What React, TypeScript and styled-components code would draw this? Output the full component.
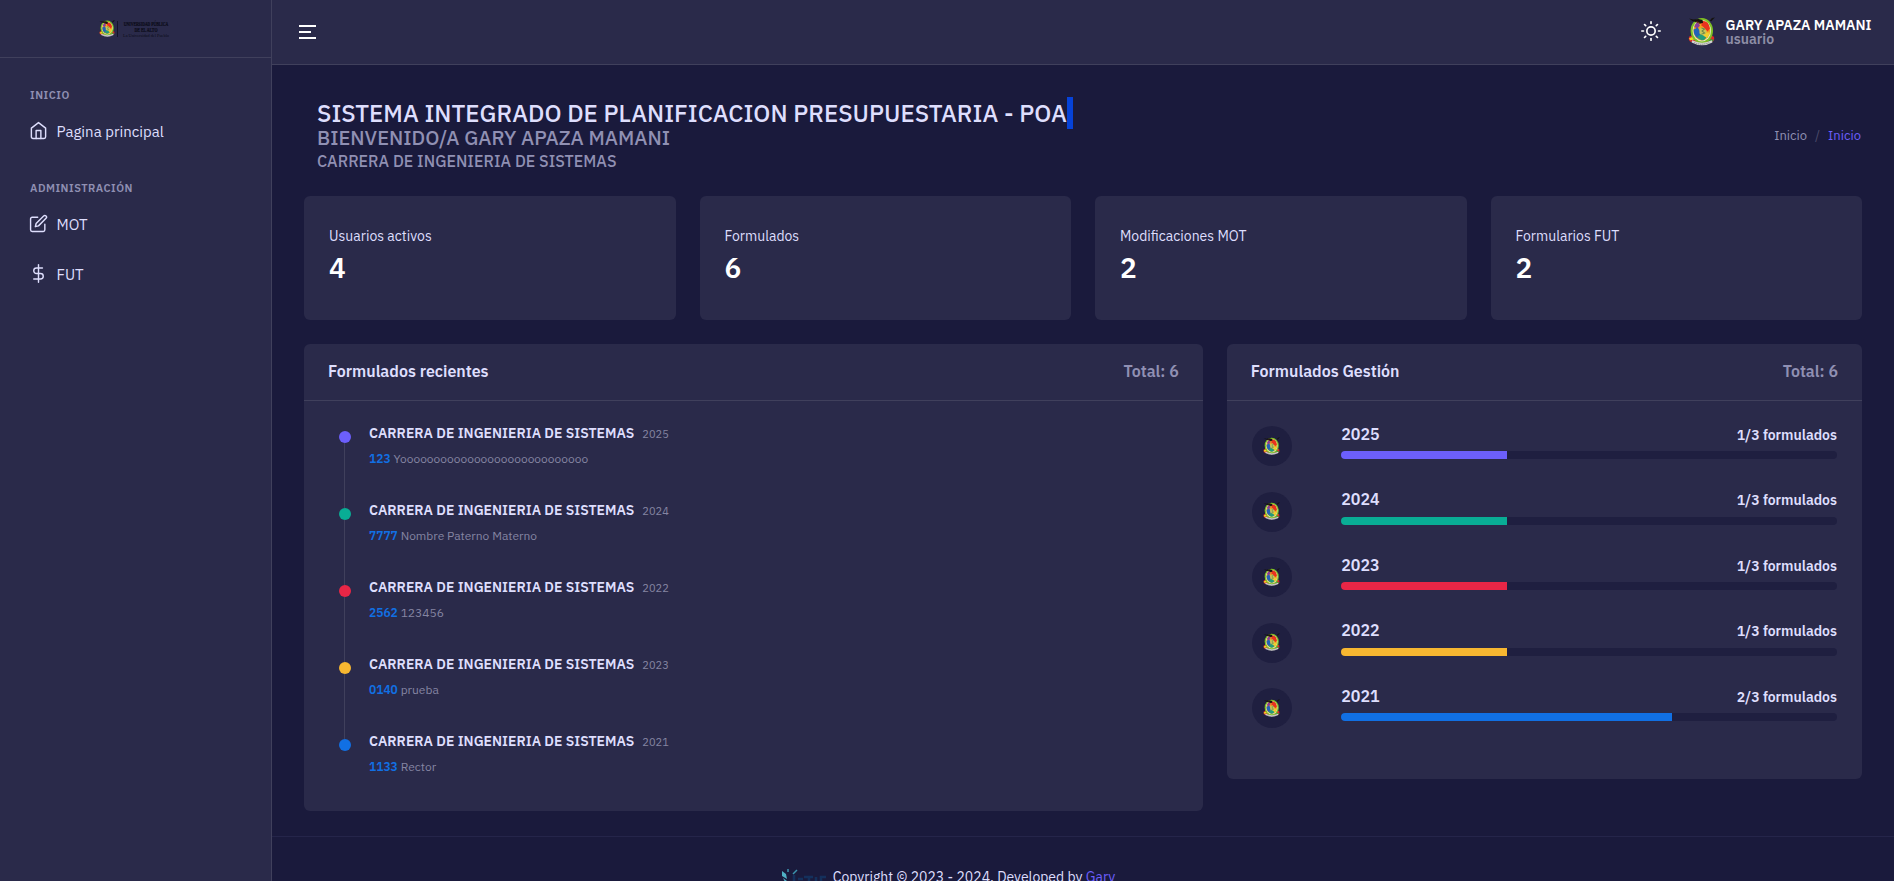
import React from 'react';
import styled, { createGlobalStyle } from 'styled-components';
import { FiHome, FiEdit, FiDollarSign, FiSun } from 'react-icons/fi';

const color = {
  page: '#1a1a3c',
  panel: '#2a2a4a',
  line: '#40405c',
  text: '#dedefd',
  muted: '#9090b3',
  faint: '#8585a2',
  primary: '#6c5ffc',
  green: '#09ad95',
  red: '#e82646',
  yellow: '#f7b731',
  blue: '#1170e4',
};

const Global = createGlobalStyle`
  *, *::before, *::after { box-sizing: border-box; }
  body {
    margin: 0;
    overflow: hidden;
    background: ${color.page};
    color: ${color.text};
    font-family: 'IBM Plex Sans', Roboto, 'Noto Sans', sans-serif;
    font-size: 14px;
  }
  h1, h2, h3, p, ul { margin: 0; padding: 0; }
  ul { list-style: none; }
`;

const Shell = styled.div`
  display: grid;
  grid-template-columns: 272px 1fr;
  height: 881px;
  overflow: hidden;
`;

const Sidebar = styled.aside`
  background: ${color.panel};
  border-right: 1px solid ${color.line};
`;

const Brand = styled.div`
  height: 58px;
  padding: 1px 0 0 99px;
  display: flex;
  align-items: center;
  border-bottom: 1px solid ${color.line};
`;

const BrandText = styled.svg`
  width: 54px;
  height: 18px;
  margin-left: 2px;
  overflow: visible;
  font-family: 'Liberation Serif', serif;
  text-anchor: middle;
  fill: #0b0b18;
`;

const NavTitle = styled.h3<{ $top: number }>`
  margin: ${(p) => p.$top}px 0 4.5px;
  padding-left: 30px;
  font-size: 11px;
  line-height: 14px;
  font-weight: 600;
  letter-spacing: 0.5px;
  color: ${color.muted};
`;

const NavLink = styled.a`
  display: flex;
  align-items: center;
  gap: 8.5px;
  height: 50px;
  padding-left: 29px;
  font-size: 15px;
  line-height: 20px;
  color: ${color.text};

  svg {
    width: 19px;
    height: 19px;
    margin-top: -1.5px;
    stroke-width: 1.8;
  }
`;

const Main = styled.div`
  min-width: 0;
`;

const Header = styled.header`
  height: 65px;
  padding: 0 22.5px 0 27px;
  display: flex;
  align-items: center;
  background: ${color.panel};
  border-bottom: 1px solid ${color.line};
`;

const Burger = styled.div`
  width: 17px;
  display: grid;
  gap: 4px;
`;

const BurgerLine = styled.i<{ $short?: boolean }>`
  width: ${(p) => (p.$short ? 12 : 17)}px;
  height: 2px;
  background: #fff;
`;

const ThemeToggle = styled(FiSun)`
  width: 20px;
  height: 20px;
  margin: -3px 27px 0 auto;
  color: #fff;
`;

const User = styled.div`
  display: flex;
  align-items: center;
  gap: 11px;
  font-weight: 600;
  line-height: 14px;
`;

const UserName = styled.div`
  color: #fff;
`;

const UserRole = styled.div`
  color: #8e8ea6;
`;

const Content = styled.main`
  padding: 32px 32px 25px;
`;

const PageHead = styled.div`
  display: flex;
  justify-content: space-between;
  align-items: center;
  padding: 0 1px 0 13px;
  margin-bottom: 20px;
`;

const PageTitle = styled.h1`
  display: flex;
  font-size: 24px;
  line-height: 32px;
  font-weight: 500;
`;

const Caret = styled.span`
  width: 6px;
  height: 32px;
  background: #0642d8;
`;

const Welcome = styled.h2`
  font-size: 20px;
  line-height: 17px;
  font-weight: 500;
  color: ${color.muted};
`;

const Career = styled.h3`
  font-size: 16px;
  line-height: 30px;
  font-weight: 500;
  color: ${color.muted};
`;

const Crumbs = styled.nav`
  display: flex;
  gap: 8px;
  margin-top: -2px;
  font-size: 13px;
  line-height: 20px;
  color: ${color.muted};
`;

const CrumbSlash = styled.span`
  color: #4c4c6a;
`;

const CrumbCurrent = styled.span`
  color: ${color.primary};
`;

const Stats = styled.section`
  display: grid;
  grid-template-columns: repeat(4, 1fr);
  gap: 24px;
  margin-bottom: 24px;
`;

const Stat = styled.article`
  height: 124px;
  padding: 30px 25px;
  border-radius: 6px;
  background: ${color.panel};
`;

const StatLabel = styled.p`
  line-height: 21px;
`;

const StatValue = styled.p`
  margin-top: 4px;
  font-size: 28px;
  line-height: 34px;
  font-weight: 600;
  color: #fff;
`;

const Panels = styled.section`
  display: grid;
  grid-template-columns: 898.8px 1fr;
  gap: 24px;
  align-items: start;
`;

const Panel = styled.article<{ $height: number }>`
  height: ${(p) => p.$height}px;
  border-radius: 6px;
  background: ${color.panel};
`;

const PanelHead = styled.header`
  display: flex;
  justify-content: space-between;
  height: 57px;
  padding: 17px 24px 0;
  border-bottom: 1px solid ${color.line};
  font-size: 16px;
  line-height: 20px;
`;

const PanelTitle = styled.h2`
  font-size: 16px;
  font-weight: 600;
`;

const Total = styled.span`
  font-weight: 600;
  color: ${color.muted};
`;

const Timeline = styled.ul`
  padding: 21px 24px 0 35px;
`;

const Event = styled.li`
  display: grid;
  grid-template-columns: 12px 1fr;
  column-gap: 18px;
  height: 77px;
`;

const Rail = styled.div`
  display: flex;
  flex-direction: column;
  align-items: center;
  padding-top: 9px;
`;

const Dot = styled.i<{ $color: string }>`
  flex: none;
  width: 12px;
  height: 12px;
  border-radius: 50%;
  background: ${(p) => p.$color};
`;

const Thread = styled.i`
  width: 1px;
  height: 65px;
  flex: none;
  margin-right: 1px;
  background: ${color.line};
`;

const EventTitle = styled.div`
  display: flex;
  align-items: baseline;
  gap: 8px;
  line-height: 22px;
  font-weight: 600;
`;

const EventYear = styled.span`
  font-size: 11px;
  font-weight: 400;
  color: ${color.faint};
`;

const EventNote = styled.p`
  margin-top: 5px;
  font-size: 12px;
  line-height: 18px;
  color: ${color.faint};
`;

const Code = styled.b`
  font-weight: 600;
  color: ${color.blue};
`;

const YearList = styled.ul`
  padding: 22.7px 25px 0;
`;

const YearRow = styled.li`
  display: grid;
  grid-template-columns: 40px 1fr;
  column-gap: 49.4px;
  height: 65.5px;
`;

const Avatar = styled.div`
  width: 40px;
  height: 40px;
  margin-top: 2.4px;
  display: grid;
  place-items: center;
  border-radius: 50%;
  background: #1f1f40;
`;

const YearHead = styled.div`
  display: flex;
  justify-content: space-between;
  align-items: baseline;
  height: 27.8px;
  font-size: 14px;
  line-height: 21px;
  font-weight: 600;
`;

const YearLabel = styled.span`
  font-size: 16px;
  font-weight: 600;
`;

const Track = styled.div`
  height: 8px;
  border-radius: 4px;
  overflow: hidden;
  background: #1f1f40;
`;

const Fill = styled.div<{ $color: string }>`
  height: 100%;
  background: ${(p) => p.$color};
`;

const Footer = styled.footer`
  display: flex;
  justify-content: center;
  padding: 29.5px 270px 0 0;
  border-top: 1px solid #25254a;
  line-height: 21px;
  white-space: pre;
`;

const FooterLogo = styled.svg`
  margin: 2px 6px 0 0;
  width: 46px;
  height: 24px;
`;

const FooterLink = styled.a`
  color: ${color.primary};
`;

function Emblem({ size }: { size: number }) {
  return (
    <svg width={size} height={(size * 28) / 26} viewBox="0 0 26 28">
      <path d="M1 19l4-2 4 7-6 0q-3-1-2-5z" fill="#dc2a2a" />
      <path d="M25 19l-4-2-4 7 6 0q3-1 2-5z" fill="#dc2a2a" />
      <path d="M1 20.500l5-2 2 3-6 1z" fill="#ecd822" />
      <path d="M25 22l-5-1-1 3 4 0z" fill="#3a9a35" />
      <ellipse cx="13.3" cy="13.200" rx="10.800" ry="12.200" fill="#7fc024" />
      <ellipse cx="13.3" cy="13.200" rx="8.900" ry="10.300" fill="#e3ecc4" />
      <ellipse cx="13.3" cy="13.200" rx="8.100" ry="9.400" fill="#f2a01f" />
      <path d="M13 4q7-1 8 7l-2 3-6-6z" fill="#e8321f" />
      <path d="M6 9q1-3 3.500-4.500l2 4-3 3z" fill="#8a3e98" />
      <path d="M5.400 12l4-2 3 5-2 6q-5-2-5-9z" fill="#2262b8" />
      <path d="M9 19l4-3 5 2q-1 4.500-5 4.500-2 0-4-3.500z" fill="#239b7b" />
      <path d="M16 15l5 0q-1 4-3 5l-3-2z" fill="#f0cf2e" />
      <path d="M11 11l4-1 3 4-3 4-4-2z" fill="#c8c65a" />
      <path d="M13 10.500l3 1-2.500 2 2.500 2-3 1" fill="none" stroke="#6f8a48" />
      <path d="M1 1.500l4 1 5-.5 4 1 .5 2.500-3 1-3-1.500-4-1zM26 .5l-3 .5-2 2.500 1.500 .5 2-2z" fill="#15130f" />
      <path d="M8 4.500l3 1" stroke="#7a2a20" />
      <path d="M4 22.500q9.500 4.500 19 0l.5 2q-10 5.500-20 0z" fill="#d4d4d2" />
      <path d="M6 24.700q7 3 14.500 0" fill="none" stroke="#80807e" strokeWidth="1" strokeDasharray="1 1" />
    </svg>
  );
}

const stats = [
  ['Usuarios activos', '4'],
  ['Formulados', '6'],
  ['Modificaciones MOT', '2'],
  ['Formularios FUT', '2'],
];

const events = [
  { year: '2025', code: '123', note: 'Yoooooooooooooooooooooooooooo', tone: color.primary },
  { year: '2024', code: '7777', note: 'Nombre Paterno Materno', tone: color.green },
  { year: '2022', code: '2562', note: '123456', tone: color.red },
  { year: '2023', code: '0140', note: 'prueba', tone: color.yellow },
  { year: '2021', code: '1133', note: 'Rector', tone: color.blue },
];

const years = [
  { year: '2025', done: 1, tone: color.primary },
  { year: '2024', done: 1, tone: color.green },
  { year: '2023', done: 1, tone: color.red },
  { year: '2022', done: 1, tone: color.yellow },
  { year: '2021', done: 2, tone: color.blue },
];

export default function App() {
  return (
    <>
      <Global />
      <Shell>
        <Sidebar>
          <Brand>
            <Emblem size={16} />
            <BrandText viewBox="0 0 54 18">
              <path d="M.5 1v16" stroke="#14142a" />
              <text x="29" y="5.500" fontSize="5.500" fontWeight="700" textLength="44.500" lengthAdjust="spacingAndGlyphs" stroke="#0b0b18" strokeWidth=".2">
                UNIVERSIDAD PÚBLICA
              </text>
              <text x="29" y="11.700" fontSize="5.500" fontWeight="700" textLength="23" lengthAdjust="spacingAndGlyphs" stroke="#0b0b18" strokeWidth=".2">
                DE EL ALTO
              </text>
              <text x="29" y="17" fontSize="4.800" textLength="46" lengthAdjust="spacingAndGlyphs">
                La Universidad del Pueblo
              </text>
            </BrandText>
          </Brand>
          <NavTitle $top={30}>INICIO</NavTitle>
          <NavLink>
            <FiHome />
            Pagina principal
          </NavLink>
          <NavTitle $top={24.5}>ADMINISTRACIÓN</NavTitle>
          <NavLink>
            <FiEdit />
            MOT
          </NavLink>
          <NavLink>
            <FiDollarSign />
            FUT
          </NavLink>
        </Sidebar>

        <Main>
          <Header>
            <Burger>
              <BurgerLine />
              <BurgerLine $short />
              <BurgerLine />
            </Burger>
            <ThemeToggle />
            <User>
              <Emblem size={27} />
              <div>
                <UserName>GARY APAZA MAMANI</UserName>
                <UserRole>usuario</UserRole>
              </div>
            </User>
          </Header>

          <Content>
            <PageHead>
              <div>
                <PageTitle>
                  SISTEMA INTEGRADO DE PLANIFICACION PRESUPUESTARIA - POA
                  <Caret />
                </PageTitle>
                <Welcome>BIENVENIDO/A GARY APAZA MAMANI</Welcome>
                <Career>CARRERA DE INGENIERIA DE SISTEMAS</Career>
              </div>
              <Crumbs>
                <span>Inicio</span>
                <CrumbSlash>/</CrumbSlash>
                <CrumbCurrent>Inicio</CrumbCurrent>
              </Crumbs>
            </PageHead>

            <Stats>
              {stats.map(([label, value]) => (
                <Stat key={label}>
                  <StatLabel>{label}</StatLabel>
                  <StatValue>{value}</StatValue>
                </Stat>
              ))}
            </Stats>

            <Panels>
              <Panel $height={467}>
                <PanelHead>
                  <PanelTitle>Formulados recientes</PanelTitle>
                  <Total>Total: 6</Total>
                </PanelHead>
                <Timeline>
                  {events.map((e, i) => (
                    <Event key={e.year}>
                      <Rail>
                        <Dot $color={e.tone} />
                        {i < events.length - 1 && <Thread />}
                      </Rail>
                      <div>
                        <EventTitle>
                          CARRERA DE INGENIERIA DE SISTEMAS
                          <EventYear>{e.year}</EventYear>
                        </EventTitle>
                        <EventNote>
                          <Code>{e.code}</Code> {e.note}
                        </EventNote>
                      </div>
                    </Event>
                  ))}
                </Timeline>
              </Panel>

              <Panel $height={435}>
                <PanelHead>
                  <PanelTitle>Formulados Gestión</PanelTitle>
                  <Total>Total: 6</Total>
                </PanelHead>
                <YearList>
                  {years.map((y) => (
                    <YearRow key={y.year}>
                      <Avatar>
                        <Emblem size={17} />
                      </Avatar>
                      <div>
                        <YearHead>
                          <YearLabel>{y.year}</YearLabel>
                          <span>{y.done}/3 formulados</span>
                        </YearHead>
                        <Track>
                          <Fill $color={y.tone} style={{ width: `${Math.ceil((y.done / 3) * 496)}px` }} />
                        </Track>
                      </div>
                    </YearRow>
                  ))}
                </YearList>
              </Panel>
            </Panels>
          </Content>

          <Footer>
            <FooterLogo viewBox="0 0 46 24">
              <path d="M1 2l4 3 1 5-5-3zM2 9l4 3v5z" fill="#4fb0c4" />
              <path d="M7 3V0M12 5l4-4" stroke="#3c93ad" strokeWidth="1.500" />
              <path d="M13 6v9M17 10h5M23 8h9M28 8v9M35 8v9M45 8h-5v9" stroke="#14305c" strokeWidth="2.500" fill="none" />
            </FooterLogo>
            Copyright © 2023 - 2024. Developed by <FooterLink>Gary</FooterLink>
          </Footer>
        </Main>
      </Shell>
    </>
  );
}
